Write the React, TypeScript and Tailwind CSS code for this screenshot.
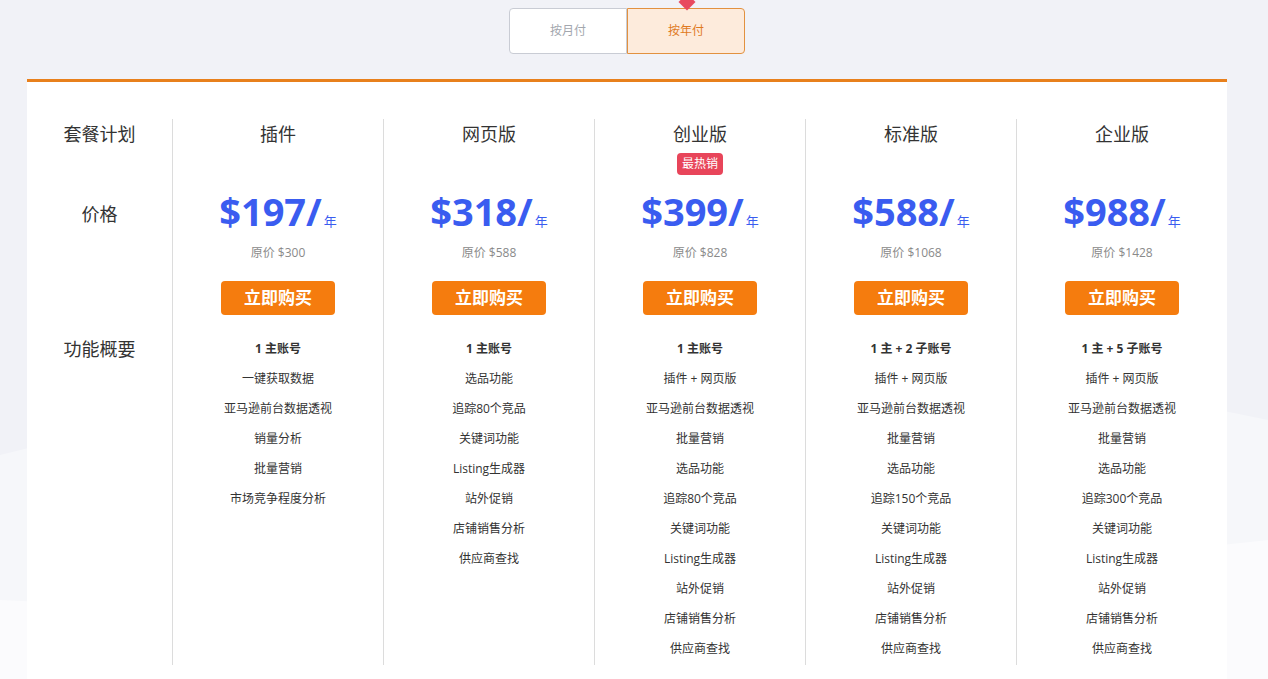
const font = { fontFamily: '"Open Sans", "Noto Sans CJK SC", sans-serif' };

const plans = [
  { name: "插件", price: "197", orig: "300", feats: ["1 主账号", "一键获取数据", "亚马逊前台数据透视", "销量分析", "批量营销", "市场竞争程度分析"] },
  { name: "网页版", price: "318", orig: "588", feats: ["1 主账号", "选品功能", "追踪80个竞品", "关键词功能", "Listing生成器", "站外促销", "店铺销售分析", "供应商查找"] },
  { name: "创业版", price: "399", orig: "828", hot: true, feats: ["1 主账号", "插件 + 网页版", "亚马逊前台数据透视", "批量营销", "选品功能", "追踪80个竞品", "关键词功能", "Listing生成器", "站外促销", "店铺销售分析", "供应商查找"] },
  { name: "标准版", price: "588", orig: "1068", feats: ["1 主 + 2 子账号", "插件 + 网页版", "亚马逊前台数据透视", "批量营销", "选品功能", "追踪150个竞品", "关键词功能", "Listing生成器", "站外促销", "店铺销售分析", "供应商查找"] },
  { name: "企业版", price: "988", orig: "1428", feats: ["1 主 + 5 子账号", "插件 + 网页版", "亚马逊前台数据透视", "批量营销", "选品功能", "追踪300个竞品", "关键词功能", "Listing生成器", "站外促销", "店铺销售分析", "供应商查找"] },
];

export default function App() {
  return (
    <div className="relative w-[1268px] h-[679px] overflow-hidden bg-[#f1f2f7]" style={font}>
      <svg className="absolute left-0 top-0" width="1268" height="679">
        <path d="M0 455 C 300 380, 700 300, 1268 420 L1268 679 L0 679 Z" fill="#f6f7fa" />
        <path d="M0 600 C 400 620, 900 580, 1268 540 L1268 679 L0 679 Z" fill="#fbfbfd" />
      </svg>
      <div className="relative flex justify-center pt-2">
        <div className="relative flex mr-[14px]">
          <div className="w-[118px] h-[46px] flex items-center justify-center bg-white border border-[#c9ccd4] rounded-l text-[12px] text-[#a3a7ae]">按月付</div>
          <div className="w-[118px] h-[46px] flex items-center justify-center bg-[#fdebdc] border border-[#e2913f] rounded-r text-[12px] text-[#e07a1f]">按年付</div>
          <div className="absolute left-[172px] -top-[12px] w-[12px] h-[12px] bg-[#e84a5f] rotate-45" />
        </div>
      </div>
      <div className="relative ml-[27px] w-[1200px] mt-[25px] bg-white border-t-[3px] border-[#e8801c] h-[600px] flex pt-[37px]">
        <div className="w-[145px] flex flex-col items-center text-[18px] text-[#333]">
          <div className="h-[30px] leading-[30px]">套餐计划</div>
          <div className="mt-[50px] h-[30px] leading-[30px]">价格</div>
          <div className="mt-[105px] h-[30px] leading-[30px]">功能概要</div>
        </div>
        {plans.map((p) => (
          <div key={p.name} className="w-[211px] h-[546px] border-l border-[#dcdcdc] flex flex-col items-center">
            <div className="h-[30px] leading-[30px] text-[18px] text-[#333]">{p.name}</div>
            <div className="h-[29px] flex items-center">
              {p.hot && <span className="bg-[#e8455a] text-white text-[12px] rounded px-[5px] py-[2px]">最热销</span>}
            </div>
            <div className="mt-[11px] flex items-end text-[#3a5cf0] font-bold">
              <span className="text-[38px] leading-[44px]">${p.price}/</span>
              <span className="text-[13px] font-normal mb-[2px] ml-[2px]">年</span>
            </div>
            <div className="mt-[11px] text-[12px] text-[#8a8a8a]">原价 ${p.orig}</div>
            <button className="mt-[19px] w-[114px] h-[34px] rounded bg-[#f57c0e] text-white font-bold text-[17px]">立即购买</button>
            <div className="mt-[19px] flex flex-col items-center">
              {p.feats.map((f, i) => (
                <div key={i} className={`h-[30px] leading-[30px] text-[12px] text-[#333] ${i === 0 ? "font-bold" : ""}`}>{f}</div>
              ))}
            </div>
          </div>
        ))}
      </div>
    </div>
  );
}
